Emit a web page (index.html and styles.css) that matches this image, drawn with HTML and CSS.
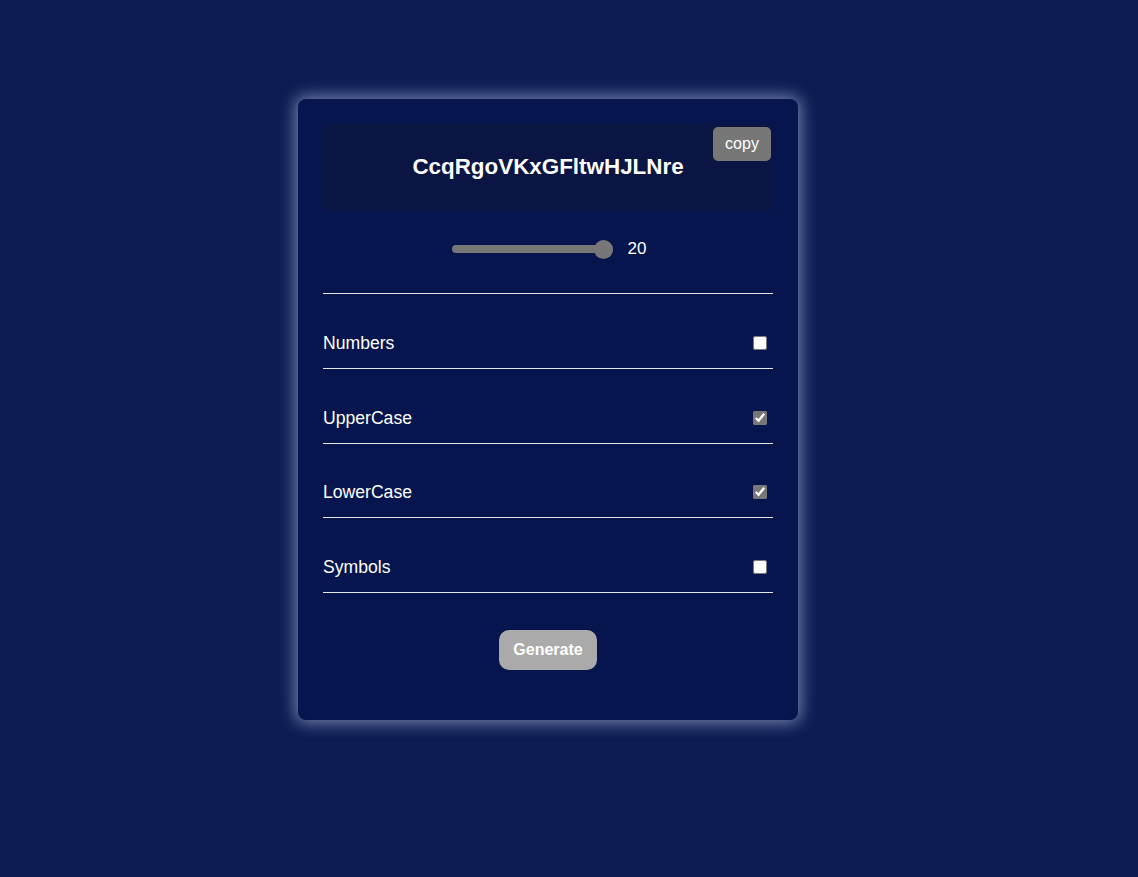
FILE: index.html
```html
<!DOCTYPE html>
<html>
<head>
<meta charset="utf-8">
<link rel="stylesheet" href="styles.css">
</head>
<body>
<div class="card">
  <div class="display">
    <span class="password">CcqRgoVKxGFltwHJLNre</span>
    <button class="copy">copy</button>
  </div>
  <div class="length">
    <input class="range" type="range" min="4" max="20" value="20">
    <span class="count">20</span>
  </div>
  <div class="option"><span>Numbers</span><input type="checkbox"></div>
  <div class="option"><span>UpperCase</span><input type="checkbox" checked></div>
  <div class="option"><span>LowerCase</span><input type="checkbox" checked></div>
  <div class="option"><span>Symbols</span><input type="checkbox"></div>
  <div class="actions"><button class="generate">Generate</button></div>
</div>
</body>
</html>
```

FILE: styles.css
```css
html, body {
  margin: 0;
  padding: 0;
}
body {
  background: #0c1d54;
  font-family: "Liberation Sans", Arial, sans-serif;
  color: #fff;
  min-height: 877px;
  display: flex;
  align-items: flex-start;
}
.card {
  margin: 99px 0 0 298px;
  width: 500px;
  box-sizing: border-box;
  padding: 25px 25px 50px;
  background: #06154d;
  border-radius: 8px;
  box-shadow: 0 0 16px 3px rgba(200, 210, 240, 0.55);
  display: flex;
  flex-direction: column;
}
.display {
  position: relative;
  height: 87px;
  background: #0a1543;
  border-radius: 6px;
  display: flex;
  align-items: center;
  justify-content: center;
}
.password {
  font-size: 22.4px;
  font-weight: bold;
  margin-top: -2px;
}
.copy {
  position: absolute;
  top: 3px;
  right: 2px;
  width: 58px;
  height: 34px;
  border: none;
  border-radius: 5px;
  background: #777;
  color: #fff;
  font-family: inherit;
  font-size: 16px;
  padding: 0;
}
.length {
  margin-top: 28px;
  padding-bottom: 34px;
  padding-left: 2px;
  border-bottom: 1px solid #e6e6e6;
  display: flex;
  justify-content: center;
  align-items: center;
  gap: 15px;
  height: 20px;
}
.range {
  -webkit-appearance: none;
  appearance: none;
  width: 161px;
  height: 8px;
  margin: 0;
  background: #777;
  border-radius: 4px;
  outline: none;
}
.range::-webkit-slider-thumb {
  -webkit-appearance: none;
  appearance: none;
  width: 19px;
  height: 19px;
  border-radius: 50%;
  background: #777;
  border: none;
}
.count {
  font-size: 17px;
}
.option {
  height: 74.75px;
  box-sizing: border-box;
  padding-bottom: 16px;
  border-bottom: 1px solid #e6e6e6;
  display: flex;
  justify-content: space-between;
  align-items: flex-end;
  font-size: 17.6px;
}
.option span {
  line-height: 18px;
}
.option input {
  width: 14px;
  height: 14px;
  margin: 0 6px 2px 0;
  accent-color: #777;
}
.actions {
  display: flex;
  justify-content: center;
  margin-top: 37px;
}
.generate {
  width: 98px;
  height: 40px;
  border: none;
  border-radius: 10px;
  background: #aaa;
  color: #fff;
  font-family: inherit;
  font-weight: bold;
  font-size: 16px;
}
```
